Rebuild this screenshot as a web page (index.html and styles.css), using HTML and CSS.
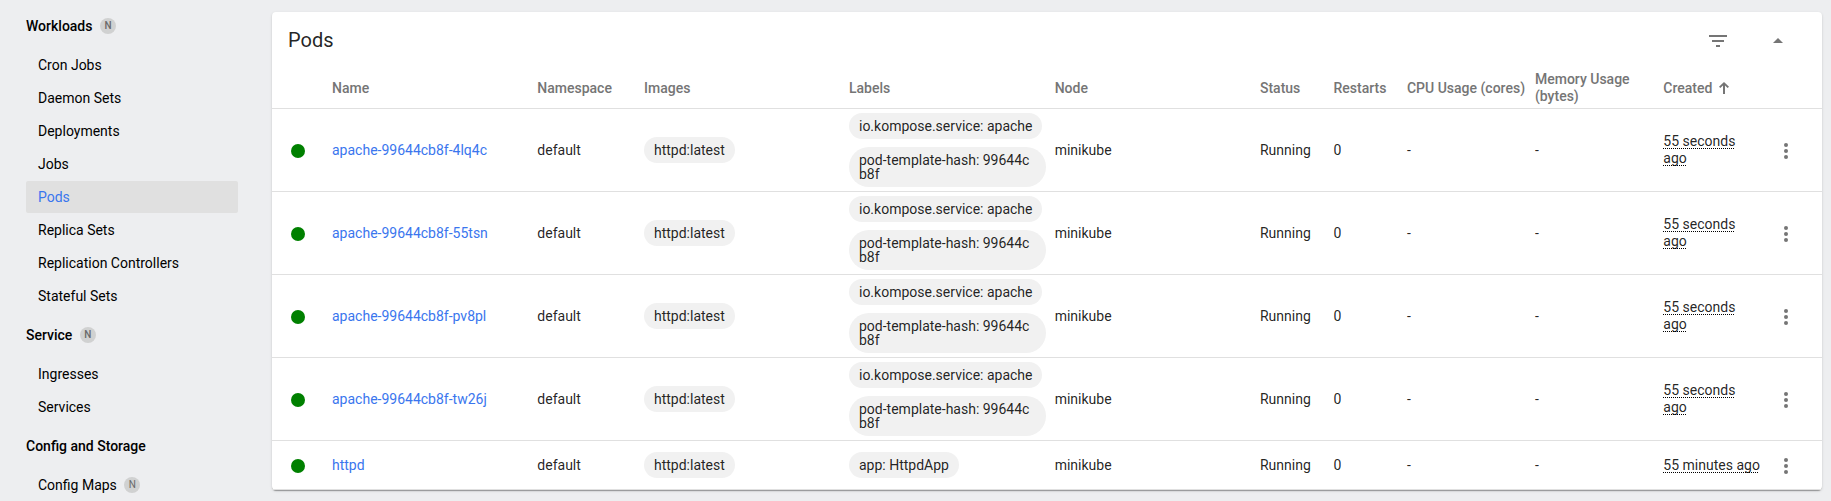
FILE: index.html
```html
<!DOCTYPE html>
<html lang="en">
<head>
<meta charset="utf-8">
<title>Pods</title>
<link rel="stylesheet" href="styles.css">
</head>
<body>
<div class="app">
  <nav class="sidebar">
    <div class="group">Workloads <span class="tag">N</span></div>
    <a class="item">Cron Jobs</a>
    <a class="item">Daemon Sets</a>
    <a class="item">Deployments</a>
    <a class="item">Jobs</a>
    <a class="item active">Pods</a>
    <a class="item">Replica Sets</a>
    <a class="item">Replication Controllers</a>
    <a class="item">Stateful Sets</a>
    <div class="group">Service <span class="tag">N</span></div>
    <a class="item">Ingresses</a>
    <a class="item">Services</a>
    <div class="group">Config and Storage</div>
    <a class="item">Config Maps <span class="tag light">N</span></a>
  </nav>
  <main class="card">
    <header class="card-head">
      <h1 class="title">Pods</h1>
      <svg class="icon filter" viewBox="0 0 24 24"><path d="M10 18h4v-2h-4v2zM3 6v2h18V6H3zm3 7h12v-2H6v2z"/></svg>
      <svg class="icon" viewBox="0 0 24 24"><path d="M7 14l5-5 5 5z"/></svg>
    </header>
    <div class="row head">
      <span></span><span>Name</span><span>Namespace</span><span>Images</span><span>Labels</span><span>Node</span><span>Status</span><span>Restarts</span><span>CPU Usage (cores)</span><span>Memory Usage (bytes)</span><span class="sorted">Created <svg class="arrow" viewBox="0 0 12 12"><path d="M5 12V3.4L2.3 6.1 1 4.8 6 0l5 4.8-1.3 1.3L7 3.4V12z"/></svg></span><span></span>
    </div>
    <div class="row">
      <i class="dot"></i><a class="link">apache-99644cb8f-4lq4c</a><span>default</span><span class="chips"><b class="chip">httpd:latest</b></span><span class="chips"><b class="chip">io.kompose.service: apache</b><b class="chip">pod-template-hash: 99644cb8f</b></span><span>minikube</span><span>Running</span><span>0</span><span>-</span><span>-</span><span class="age"><u>55 seconds ago</u></span><svg class="more" viewBox="0 0 4 16"><circle cx="2" cy="2" r="2"/><circle cx="2" cy="8" r="2"/><circle cx="2" cy="14" r="2"/></svg>
    </div>
    <div class="row">
      <i class="dot"></i><a class="link">apache-99644cb8f-55tsn</a><span>default</span><span class="chips"><b class="chip">httpd:latest</b></span><span class="chips"><b class="chip">io.kompose.service: apache</b><b class="chip">pod-template-hash: 99644cb8f</b></span><span>minikube</span><span>Running</span><span>0</span><span>-</span><span>-</span><span class="age"><u>55 seconds ago</u></span><svg class="more" viewBox="0 0 4 16"><circle cx="2" cy="2" r="2"/><circle cx="2" cy="8" r="2"/><circle cx="2" cy="14" r="2"/></svg>
    </div>
    <div class="row">
      <i class="dot"></i><a class="link">apache-99644cb8f-pv8pl</a><span>default</span><span class="chips"><b class="chip">httpd:latest</b></span><span class="chips"><b class="chip">io.kompose.service: apache</b><b class="chip">pod-template-hash: 99644cb8f</b></span><span>minikube</span><span>Running</span><span>0</span><span>-</span><span>-</span><span class="age"><u>55 seconds ago</u></span><svg class="more" viewBox="0 0 4 16"><circle cx="2" cy="2" r="2"/><circle cx="2" cy="8" r="2"/><circle cx="2" cy="14" r="2"/></svg>
    </div>
    <div class="row">
      <i class="dot"></i><a class="link">apache-99644cb8f-tw26j</a><span>default</span><span class="chips"><b class="chip">httpd:latest</b></span><span class="chips"><b class="chip">io.kompose.service: apache</b><b class="chip">pod-template-hash: 99644cb8f</b></span><span>minikube</span><span>Running</span><span>0</span><span>-</span><span>-</span><span class="age"><u>55 seconds ago</u></span><svg class="more" viewBox="0 0 4 16"><circle cx="2" cy="2" r="2"/><circle cx="2" cy="8" r="2"/><circle cx="2" cy="14" r="2"/></svg>
    </div>
    <div class="row last">
      <i class="dot"></i><a class="link">httpd</a><span>default</span><span class="chips"><b class="chip">httpd:latest</b></span><span class="chips"><b class="chip">app: HttpdApp</b></span><span>minikube</span><span>Running</span><span>0</span><span>-</span><span>-</span><span class="age"><u>55 minutes ago</u></span><svg class="more" viewBox="0 0 4 16"><circle cx="2" cy="2" r="2"/><circle cx="2" cy="8" r="2"/><circle cx="2" cy="14" r="2"/></svg>
    </div>
  </main>
</div>
</body>
</html>
```
FILE: styles.css
```css
* { box-sizing: border-box; }
body {
  margin: 0;
  height: 501px;
  overflow: hidden;
  background: #edeef0;
  font: 14px/17px Roboto, sans-serif;
  color: rgba(0, 0, 0, .87);
}
.app { display: flex; align-items: flex-start; }
.sidebar {
  width: 272px;
  padding: 10px 34px 0 26px;
  color: #000;
}
.group {
  display: flex;
  align-items: center;
  height: 32px;
  margin-bottom: 7px;
  font-weight: 500;
}
.item + .group { margin-top: 7px; }
.item {
  display: flex;
  align-items: center;
  height: 32px;
  margin-bottom: 1px;
  padding-left: 12px;
  border-radius: 2px;
}
.item.active { background: #e0e0e0; color: #3a76ee; }
.tag {
  width: 16px;
  height: 16px;
  margin-left: 7.5px;
  border-radius: 50%;
  background: #d0d1d1;
  color: #68696a;
  font-size: 10px;
  line-height: 16px;
  font-weight: 500;
  text-align: center;
}
.tag.light { font-weight: 400; }
.card {
  width: 1550px;
  height: 478px;
  margin-top: 12px;
  border-radius: 4px;
  background: #fff;
  box-shadow: 0 2px 1px -1px rgba(0, 0, 0, .2), 0 1px 1px 0 rgba(0, 0, 0, .14), 0 1px 3px 0 rgba(0, 0, 0, .12);
}
.card-head {
  display: flex;
  align-items: center;
  height: 56px;
  padding: 2px 32px 0 16px;
}
.title { flex: 1; margin: 0 0 2px; font-size: 20px; line-height: 24px; font-weight: 400; }
.icon { width: 24px; height: 24px; fill: #757575; }
.icon.filter { margin-right: 36px; }
.row {
  display: grid;
  grid-template-columns: 60px 205.33px 106.67px 205px 205.67px 205.33px 73.5px 73.5px 128px 128.4px 111.6px 47px;
  align-items: center;
  height: 83px;
  border-bottom: 1px solid #e0e0e0;
}
.row.head { height: 41px; color: #757575; font-weight: 500; }
.row.last { height: 49px; }
.sorted { display: flex; align-items: center; }
.arrow { width: 12px; height: 12px; margin-left: 6px; fill: #757575; }
.dot {
  width: 14px;
  height: 14px;
  margin: 2px 0 0 19px;
  border-radius: 50%;
  background: #008000;
}
.link { color: #3a76ee; }
.chips { display: flex; flex-direction: column; align-items: flex-start; gap: 8px; }
.chip {
  max-width: 197px;
  padding: 6px 10px;
  border-radius: 20px;
  background: #f1f1f1;
  font-weight: 400;
  line-height: 14px;
  word-break: break-all;
}
.age { padding-right: 14px; }
.age u { text-decoration: underline dotted 1px #000; text-underline-offset: 2px; text-decoration-skip-ink: none; }
.more { width: 4px; height: 16px; margin: 1px 0 0 9px; fill: #757575; }
```
